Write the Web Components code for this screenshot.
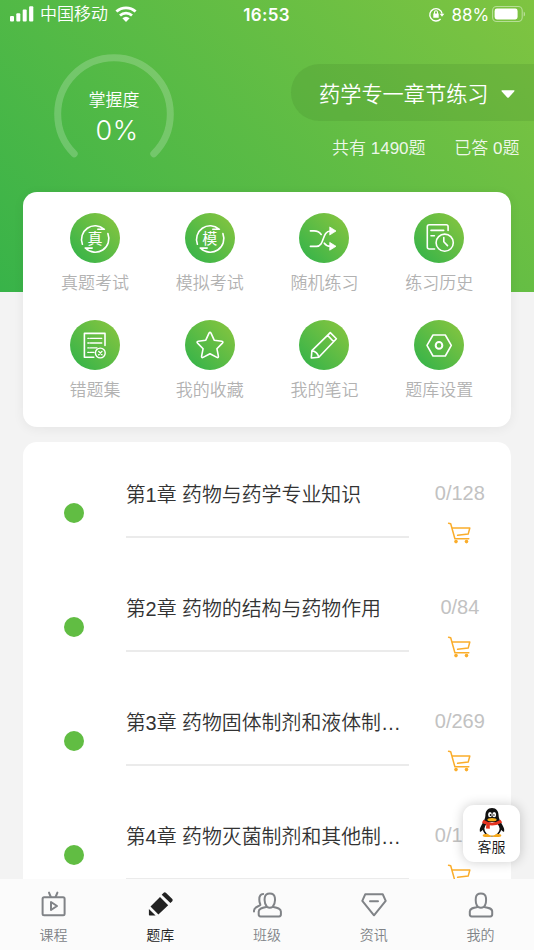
<!DOCTYPE html>
<html lang="zh-CN">
<head>
<meta charset="utf-8">
<title>题库</title>
<style>
html,body{margin:0;height:100%}
body{font-family:"Liberation Sans","Noto Sans CJK SC",sans-serif;font-weight:350;background:#f3f3f3;overflow:hidden}
</style>
</head>
<body>
<quiz-app></quiz-app>
<script>
const define = (name, css, html) => customElements.define(name, class extends HTMLElement {
  constructor() {
    super();
    const t = document.createElement('template');
    t.innerHTML = `<style>*{box-sizing:border-box}svg{display:block;overflow:visible}${css}</style>${typeof html === 'function' ? html(this) : html}`;
    this.attachShadow({mode: 'open'}).append(t.content.cloneNode(true));
  }
});

const ring = '<path d="M12.4 31.2A13.6 13.6 0 0 1 34 16.1M27.8 16.3H34.4M37.9 20.6A13.6 13.6 0 0 1 15.6 35.2M22.2 35.1H15.2"/>';
const toolIcons = {
  real: ring, mock: ring,
  shuffle: '<path d="M11.4 17.9H15C18.5 17.9 20.5 19 22.2 21.5M11.4 33.4H17.5C26 33.4 22.5 18 31.5 18M25.3 30.2C26.8 32.4 28.6 33.3 31.5 33.3"/><path fill="#fff" stroke-width=".8" d="M31 14.2L37 18L31 21.8ZM31 29.6L37 33.3L31 37Z"/>',
  history: '<path d="M20.6 36H15.2Q13.3 36 13.3 34V13.7Q13.3 11.8 15.2 11.8H32.2Q34.1 11.8 34.1 13.7V17.4M17 17.4H29.7M17 22.8H20.4M29.8 24.5V28.8L33.5 32.6"/><circle cx="30.7" cy="29.7" r="8.6"/>',
  wrong: '<path d="M23.8 37.3H14.4V13.4H35V25.5"/><path stroke-width="1.3" d="M17.8 18.3H19.2M20.4 18.3H31.8M17.8 23H19.2M20.4 23H31.8M17.8 27.9H19.2M20.4 27.9H27M17.8 32.4H19.2M20.4 32.4H24M28.7 31.4L32 34.7M32 31.4L28.7 34.7"/><circle cx="30.3" cy="33" r="4.9" stroke-width="1.4"/>',
  star: '<path d="M24 13.2Q25 11.5 26 13.2L29.2 20.2L36.8 21.3Q38.7 21.7 37.4 23.1L31.9 28.7L33.4 36.2Q33.6 38.2 31.9 37.4L25 33.8L18.1 37.4Q16.4 38.2 16.6 36.2L18.1 28.7L12.6 23.1Q11.3 21.7 13.2 21.3L20.8 20.2Z"/>',
  note: '<path d="M12.3 38L12.9 30.6L31.3 12.6L37.4 18.7L19.8 37.2ZM12.9 30.6Q18.5 31.8 19.8 37.2M28.6 15.4L34.5 21.5"/>',
  settings: '<path d="M13 25.4L19 15H31.3L37.3 25.4L31.3 36H19Z"/><circle cx="25" cy="25.4" r="3.3" stroke-width="2"/>'
};
const tabIcons = {
  course: '<rect x="4.6" y="7.3" width="22" height="18" rx="1.5"/><path d="M11 2.6L12.8 7M19.4 2.6L17.6 7M13 12V20L19 16Z"/>',
  bank: '<path fill="currentColor" stroke="none" d="M3.9 19L10.6 25.5H4.6Q3.9 25.5 3.9 24.8ZM5.5 16.5L15 6.9L23.2 15.2L13.4 24.4ZM16.7 4.8L18.7 2.7Q19.8 1.8 20.9 2.7L27.3 9Q28.2 10.1 27.3 11.2L25.4 13.1Z"/>',
  group: '<path d="M14.9 16.8C12.3 14 12.4 10 12.8 7.3C13.2 4.5 15.1 3.4 17.8 3.4C20.5 3.4 22.4 4.5 22.8 7.3C23.2 10 23.3 14 20.7 16.8Q17.8 18.6 14.9 16.8C10.9 17.6 6.7 18.2 6.7 21.4V24.6Q6.7 26.4 8.5 26.4H27.1Q28.9 26.4 28.9 24.6V21.4C28.9 18.2 24.7 17.6 20.7 16.8M11.2 4C8.5 4 7.3 6 7.3 9.5C7.3 13 8.5 14 8.3 15C7.5 16.5 2 16.6 2 20.5V21.5"/>',
  news: '<path d="M6.2 4.3H23.8L26.7 10.9L15 25.3L3.3 10.9ZM11 11.3H19"/>',
  me: '<path d="M12 16.9C9.4 14 9.5 10 9.9 7.3C10.3 4.5 12.2 3.4 14.9 3.4C17.6 3.4 19.5 4.5 19.9 7.3C20.3 10 20.4 14 17.8 16.9Q14.9 18.6 12 16.9C8 17.6 3.8 18.2 3.8 21.4V24.6Q3.8 26.4 5.6 26.4H24.4Q26.2 26.4 26.2 24.6V21.4C26.2 18.2 22 17.6 17.8 16.9"/>'
};

define('status-bar', `
  :host{display:grid;grid-template-columns:1fr auto 1fr;grid-template-rows:28px;align-items:center;height:29px;padding:0 9px 1px 10px;color:#fff;font-size:17px;line-height:28px}
  div{display:flex;align-items:center;height:28px}
  .r{justify-content:flex-end}
  b{font:600 17px/28px Inter,sans-serif;letter-spacing:.35px;padding:1px 2px 0 0}
  .pct{font:400 17px/28px Inter,sans-serif;letter-spacing:-.1px;margin:0 3px 0 8px;padding-top:1px}
  .car{margin:0 7px 0 6px;padding-top:1px}`,
  `<div><svg width="24" height="16" fill="#fff"><rect y="10" width="4" height="5.5" rx="1"/><rect x="6.3" y="7.2" width="4" height="8.3" rx="1"/><rect x="12.7" y="3.5" width="4" height="12" rx="1"/><rect x="19.1" y=".3" width="4.2" height="15.2" rx="1"/></svg>
  <span class="car">中国移动</span>
  <svg width="22" height="16" viewBox="0 0 22 16" fill="none" stroke="#fff" stroke-width="2.8"><path d="M1.4 5.6A14 14 0 0 1 20.6 5.6M5 9.5A9 9 0 0 1 17 9.5"/><path fill="#fff" stroke="none" d="M7.4 12.2A5.5 5.5 0 0 1 14.6 12.2L11 15.9Z"/></svg></div>
  <b>16:53</b>
  <div class="r"><svg width="15" height="15" viewBox="0 0 15 15" fill="none" stroke="#fff" stroke-width="1.4"><path d="M11.6 12A6.2 6.2 0 1 1 13.1 6.6"/><path fill="#fff" stroke="none" d="M10.7 6.8H15.4L13 9.8ZM4.3 6.5H9.7V10.8H4.3Z"/><path stroke-width="1.1" d="M5.5 7V5.3A1.5 1.5 0 0 1 8.5 5.3V7"/></svg>
  <span class="pct">88%</span>
  <svg width="33" height="16" viewBox="0 0 33 16"><rect x=".6" y=".5" width="29.6" height="15" rx="4" fill="none" stroke="#fff" stroke-opacity=".45" stroke-width="1.1"/><rect x="2.6" y="2.6" width="23" height="10.8" rx="2.3" fill="#fff"/><path fill="#fff" fill-opacity=".5" d="M31.7 5.5Q33 6 33 8Q33 10 31.7 10.5Z"/></svg></div>`);

define('mastery-gauge', `
  :host{display:grid;width:120px;height:120px;color:#fff;text-align:center}
  svg,div{grid-area:1/1}
  div{padding-top:35px}
  p{margin:0;font-size:17px;line-height:24px}
  strong{display:block;font:300 27px/36px Inter,sans-serif;letter-spacing:.5px;padding-left:6px}`,
  `<svg width="120" height="120"><path d="M20.2 99.8A56.3 56.3 0 1 1 99.8 99.8" fill="none" stroke="#fff" stroke-opacity=".2" stroke-width="7" stroke-linecap="round"/></svg>
  <div><p>掌握度</p><strong>0%</strong></div>`);

define('bank-picker', `
  :host{display:flex;flex-direction:column;width:243px;color:#fff}
  .pill{display:flex;align-items:center;height:57px;padding-left:28px;border-radius:29px 0 0 29px;background:rgba(60,120,40,.18);font-size:21.2px}
  .pill svg{margin-left:12px;margin-top:3px}
  .meta{display:flex;justify-content:space-between;padding:15px 14.5px 0 41px;font-size:17px;line-height:26px;color:rgba(255,255,255,.9);white-space:nowrap}`,
  `<div class="pill"><span>药学专一章节练习</span><svg width="14" height="8" fill="#fff"><path d="M1 .2H13Q14 .4 13.2 1.4L8 7.2Q7 8.2 6 7.2L.8 1.4Q0 .4 1 .2Z"/></svg></div>
  <div class="meta"><span>共有 1490题</span><span>已答 0题</span></div>`);

define('quiz-hero', `
  :host{display:block;height:292px;background:linear-gradient(45deg,#38b349 0%,#7fc441 100%)}
  .row{display:flex;justify-content:space-between;padding:25px 0 0 54px}
  bank-picker{margin-top:10px}`,
  `<status-bar></status-bar><div class="row"><mastery-gauge></mastery-gauge><bank-picker></bank-picker></div>`);

define('tool-item', `
  :host{display:flex;flex-direction:column;align-items:center;height:107px;color:#b2b2b2;font-size:17px;line-height:24px}
  .c{display:grid;place-items:center;width:50px;height:50px;border-radius:50%;background:linear-gradient(45deg,#38b449 10%,#82c440 90%);margin-bottom:9px}
  .c>*{grid-area:1/1}
  svg{fill:none;stroke:#fff;stroke-width:1.6;stroke-linecap:round;stroke-linejoin:round}
  i{font-style:normal;font-weight:400;font-size:15px;line-height:20px;color:#fff;padding-top:2px}`,
  el => `<span class="c"><svg width="50" height="50">${toolIcons[el.getAttribute('icon')]}</svg>${el.hasAttribute('glyph') ? `<i>${el.getAttribute('glyph')}</i>` : ''}</span><slot></slot>`);

define('tool-card', `
  :host{display:grid;grid-template-columns:repeat(4,1fr);align-content:start;height:235px;margin:-100px 23px 0 23.4px;padding:21.4px 14.4px 0 14.2px;border-radius:14px;background:#fff;box-shadow:0 2px 12px rgba(0,0,0,.06);position:relative}`,
  `<slot></slot>`);

define('chapter-row', `
  :host{display:grid;grid-template-columns:102.6px 283px 1fr;height:114px}
  .dot{width:20px;height:20px;border-radius:50%;background:#61bd43;place-self:center}
  .t{height:82.5px;padding-top:25px;border-bottom:2px solid #ebebeb;color:#333;font-size:19.9px;line-height:28px;white-space:nowrap}
  .r{display:flex;flex-direction:column;align-items:center;padding:23px 0 0;color:#c2c2c2;font-size:20px;line-height:28px}
  .n{white-space:nowrap}
  :host([cut]) .n{width:50px}
  svg{margin-top:15px;fill:none;stroke:#faad2b;stroke-width:1.5;stroke-linejoin:round;stroke-linecap:round}`,
  el => `<span class="dot"></span><div class="t"><slot></slot></div><div class="r"><span class="n">${el.getAttribute('count')}</span>
  <svg width="24" height="22"><path d="M.6 1.2L2.7 1.8L6.9 16.8H20.8M3.8 6H21.8L20.2 12.1L9.6 13.3"/><g fill="#faad2b" stroke="none"><circle cx="8" cy="19.6" r="1.8"/><circle cx="18.5" cy="19.6" r="1.8"/></g></svg></div>`);

define('chapter-list', `
  :host{display:block;height:500px;margin:14.5px 23px 0 23.1px;padding-top:14px;border-radius:14px;background:#fff}`,
  `<slot></slot>`);

define('service-button', `
  :host{position:absolute;left:463px;top:805px;width:57px;height:57px;display:flex;flex-direction:column;align-items:center;padding-top:3px;border-radius:11px;background:#fff;box-shadow:0 0 12px rgba(0,0,0,.2);font-size:14px;line-height:20px;color:#111}
  svg{margin-bottom:-1px}`,
  `<svg width="28" height="30" viewBox="0 0 28 30">
  <path fill="#111" d="M14 0C9.6 0 7.4 3.3 7.4 7.5C7.4 10 6.2 12 5 14.5C3.4 17.5 1.2 20.5 1.8 23.2C2.2 24.6 4 23 4.8 21.8C5.8 26 9.5 28.5 14 28.5C18.5 28.5 22.2 26 23.2 21.8C24 23 25.8 24.6 26.2 23.2C26.8 20.5 24.6 17.5 23 14.5C21.8 12 20.6 10 20.6 7.5C20.6 3.3 18.4 0 14 0Z"/>
  <ellipse cx="14" cy="20.8" rx="7.6" ry="6.8" fill="#fff"/>
  <ellipse cx="9.3" cy="27.4" rx="4.6" ry="1.6" fill="#f5a81c"/><ellipse cx="18.7" cy="27.4" rx="4.6" ry="1.6" fill="#f5a81c"/>
  <path fill="#fff" d="M9 23H19Q18.5 27.5 14 27.5Q9.5 27.5 9 23Z"/>
  <ellipse cx="12" cy="6.7" rx="1.9" ry="2.6" fill="#fff"/><ellipse cx="16.2" cy="6.7" rx="1.9" ry="2.6" fill="#fff"/><circle cx="12.6" cy="7" r=".9" fill="#111"/><circle cx="15.9" cy="7" r=".8" fill="#111"/>
  <path fill="#e5321f" d="M5.5 11.8Q14 17.5 22.5 11.8L24.2 14.6Q18.5 18 11.8 17.3V20.8L8 20.4L8.3 16.6Q5.5 15.8 4 14.4Z"/>
  <ellipse cx="14" cy="11.7" rx="4.6" ry="1.6" fill="#f5b01c"/></svg>客服`);

define('tab-item', `
  :host{display:flex;flex-direction:column;align-items:center;padding-top:11px;color:#808387;font-size:14px;line-height:20px}
  :host([active]){color:#222}
  svg{margin-bottom:5px;fill:none;stroke:currentColor;stroke-width:2;stroke-linecap:round;stroke-linejoin:round}`,
  el => `<svg width="30" height="30">${tabIcons[el.getAttribute('icon')]}</svg><slot></slot>`);

define('tab-bar', `:host{display:grid;grid-template-columns:repeat(5,1fr);height:71px;background:#fbfbfb}`, `<slot></slot>`);

define('quiz-app', `
  :host{display:flex;flex-direction:column;width:534px;height:950px;overflow:hidden;position:relative}
  main{flex:1;min-height:0;overflow:hidden;background:#f3f3f3}`,
  `<main><quiz-hero></quiz-hero>
  <tool-card>
    <tool-item icon="real" glyph="真">真题考试</tool-item><tool-item icon="mock" glyph="模">模拟考试</tool-item><tool-item icon="shuffle">随机练习</tool-item><tool-item icon="history">练习历史</tool-item>
    <tool-item icon="wrong">错题集</tool-item><tool-item icon="star">我的收藏</tool-item><tool-item icon="note">我的笔记</tool-item><tool-item icon="settings">题库设置</tool-item>
  </tool-card>
  <chapter-list>
    <chapter-row count="0/128">第1章 药物与药学专业知识</chapter-row>
    <chapter-row count="0/84">第2章 药物的结构与药物作用</chapter-row>
    <chapter-row count="0/269">第3章 药物固体制剂和液体制…</chapter-row>
    <chapter-row count="0/1" cut>第4章 药物灭菌制剂和其他制…</chapter-row>
  </chapter-list></main>
  <tab-bar><tab-item icon="course">课程</tab-item><tab-item icon="bank" active>题库</tab-item><tab-item icon="group">班级</tab-item><tab-item icon="news">资讯</tab-item><tab-item icon="me">我的</tab-item></tab-bar>
  <service-button></service-button>`);
</script>
</body>
</html>
